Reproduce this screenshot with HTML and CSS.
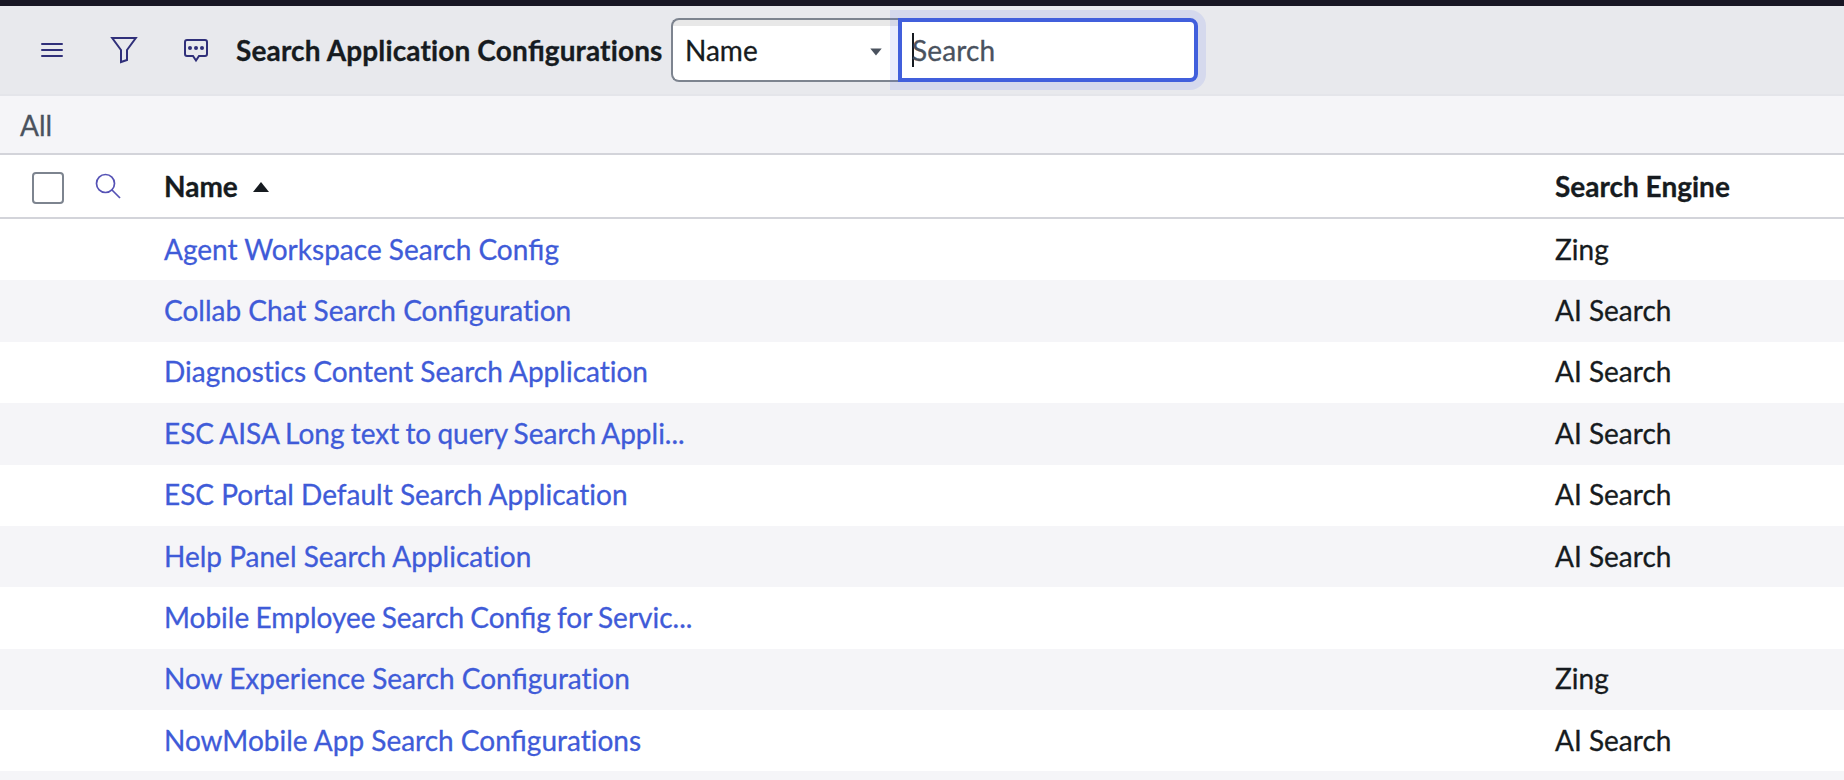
FILE: index.html
```
<!DOCTYPE html>
<html lang="en">
<head>
    <meta charset="UTF-8">
    <meta name="viewport" content="width=device-width, initial-scale=1.0">
    <title>Search Application Configurations</title>
    <link rel="stylesheet" href="styles.css">
</head>
<body>
    <header class="toolbar">
        <button class="icon-button" aria-label="Menu">
            <svg width="28" height="28" viewBox="0 0 28 28" fill="none" stroke="#30307a" stroke-width="2" stroke-linecap="round">
                <path d="M4 8h20M4 14h20M4 20h20"/>
            </svg>
        </button>
        <button class="icon-button" aria-label="Filter">
            <svg width="28" height="28" viewBox="0 0 28 28" fill="none" stroke="#30307a" stroke-width="2">
                <path d="M2.2 2H25.800L17 14V24L11 26V14Z"/>
            </svg>
        </button>
        <button class="icon-button" aria-label="Activity">
            <svg width="28" height="28" viewBox="0 0 28 28" fill="none" stroke="#30307a" stroke-width="2">
                <path d="M5 4H23Q25 4 25 6V18Q25 20 23 20H17L14 24.500L11 20H5Q3 20 3 18V6Q3 4 5 4Z"/>
                <g fill="#30307a" stroke="none">
                    <circle cx="8" cy="12" r="2"/>
                    <circle cx="14" cy="12" r="2"/>
                    <circle cx="20" cy="12" r="2"/>
                </g>
            </svg>
        </button>
        <h1 class="title">Search Application Con<span class="lig">fi</span>gurations</h1>
        <div class="search-group">
            <div class="field-select">
                <span>Name</span>
                <svg width="12" height="8" viewBox="0 0 12 8"><path d="M.3.500H11.700L6 7.500Z" fill="#4a525e"/></svg>
            </div>
            <div class="search-box">
                <span class="caret"></span>
                <span class="placeholder">Search</span>
            </div>
        </div>
    </header>

    <nav class="breadcrumb">All</nav>

    <main class="list">
        <div class="list-head">
            <div class="controls">
                <span class="checkbox"></span>
                <svg width="28" height="28" viewBox="0 0 28 28" fill="none" stroke="#5552b5" stroke-width="1.700">
                    <circle cx="11.500" cy="11.500" r="9"/>
                    <path d="M18 18L26 26"/>
                </svg>
            </div>
            <div class="name">Name
                <svg class="sort" width="16" height="10" viewBox="0 0 16 10"><path d="M8 0L16 10H0Z" fill="#161b20"/></svg>
            </div>
            <div class="engine">Search Engine</div>
        </div>
        <div class="row"><a class="name">Agent Workspace Search Con<span class="lig">fi</span>g</a><span class="engine">Zing</span></div>
        <div class="row"><a class="name">Collab Chat Search Con<span class="lig">fi</span>guration</a><span class="engine">AI Search</span></div>
        <div class="row"><a class="name">Diagnostics Content Search Application</a><span class="engine">AI Search</span></div>
        <div class="row"><a class="name truncated">ESC AISA Long text to query Search Appli...</a><span class="engine">AI Search</span></div>
        <div class="row"><a class="name">ESC Portal Default Search Application</a><span class="engine">AI Search</span></div>
        <div class="row"><a class="name">Help Panel Search Application</a><span class="engine">AI Search</span></div>
        <div class="row"><a class="name truncated">Mobile Employee Search Con<span class="lig">fi</span>g for Servic...</a><span class="engine"></span></div>
        <div class="row"><a class="name">Now Experience Search Con<span class="lig">fi</span>guration</a><span class="engine">Zing</span></div>
        <div class="row"><a class="name">NowMobile App Search Con<span class="lig">fi</span>gurations</a><span class="engine">AI Search</span></div>
        <div class="row"></div>
    </main>
</body>
</html>
```

FILE: styles.css
```
* {
    box-sizing: border-box;
}

body {
    margin: 0;
    height: 780px;
    overflow: hidden;
    background: #fff;
    color: #161b20;
    font-family: Lato, sans-serif;
    font-size: 28px;
    line-height: 34px;
    font-variant-ligatures: none;
    -webkit-text-stroke: 0.3px;
}

/* only the fi pair is joined */
.lig {
    font-variant-ligatures: common-ligatures;
    letter-spacing: 0;
}

.toolbar {
    display: flex;
    align-items: center;
    height: 96px;
    padding-left: 38px;
    border-top: 6px solid #181624;
    border-bottom: 2px solid #e4e5ea;
    background: #e8e9ed;
}

.icon-button {
    display: flex;
    margin: 0 44px 0 0;
    padding: 0;
    border: none;
    background: none;
}

.icon-button:nth-child(3) {
    margin-right: 26px;
}

.title {
    width: 435px;
    margin: 0;
    font-size: 28px;
    font-weight: 700;
    letter-spacing: 0.14px;
    white-space: nowrap;
}

.search-group {
    display: flex;
    height: 64px;
}

.field-select {
    display: flex;
    align-items: center;
    justify-content: space-between;
    width: 227px;
    padding: 0 16px 0 12px;
    border: 2px solid #7d848f;
    border-right: none;
    border-radius: 8px 0 0 8px;
    background: linear-gradient(#e8e8e8 6px, #fff 6px);
}

.field-select svg {
    margin-top: 4px;
}

.search-box {
    display: flex;
    align-items: center;
    width: 300px;
    padding: 0 0 0 10px;
    border: 4px solid #415fdc;
    border-radius: 0 8px 8px 0;
    background: #fff;
    box-shadow: 0 0 0 8px rgba(79, 107, 237, 0.12);
}

.caret {
    width: 2px;
    height: 34px;
    margin-right: -2px;
    background: #161b20;
}

.placeholder {
    color: #4a525e;
    letter-spacing: 0.15px;
}

.breadcrumb {
    height: 59px;
    padding: 12px 20px 0;
    border-bottom: 2px solid #d3d4da;
    background: #f5f5f8;
    color: #4a525e;
}

.list {
    height: 625px;
    overflow: hidden;
}

.list-head,
.row {
    display: grid;
    grid-template-columns: 164px 1391px 1fr;
    align-items: center;
}

.list-head {
    height: 64px;
    border-bottom: 2px solid #d3d4da;
    font-weight: 700;
}

.controls {
    display: flex;
    align-items: center;
    gap: 30px;
    padding: 3px 0 0 32px;
}

.controls svg {
    margin-top: -3px;
}

.checkbox {
    width: 32px;
    height: 32px;
    border: 2px solid #7d848f;
    border-radius: 4px;
    background: #fff;
}

.sort {
    margin-left: 8px;
    vertical-align: 5px;
}

.row {
    height: 61.38px;
    padding-bottom: 2px;
}

.row:nth-child(odd) {
    background: #f5f5f8;
}

.name {
    grid-column: 2;
}

.engine {
    grid-column: 3;
}

.row .name {
    color: #3f5bd8;
}

.row .truncated {
    word-spacing: -1px;
}
```
